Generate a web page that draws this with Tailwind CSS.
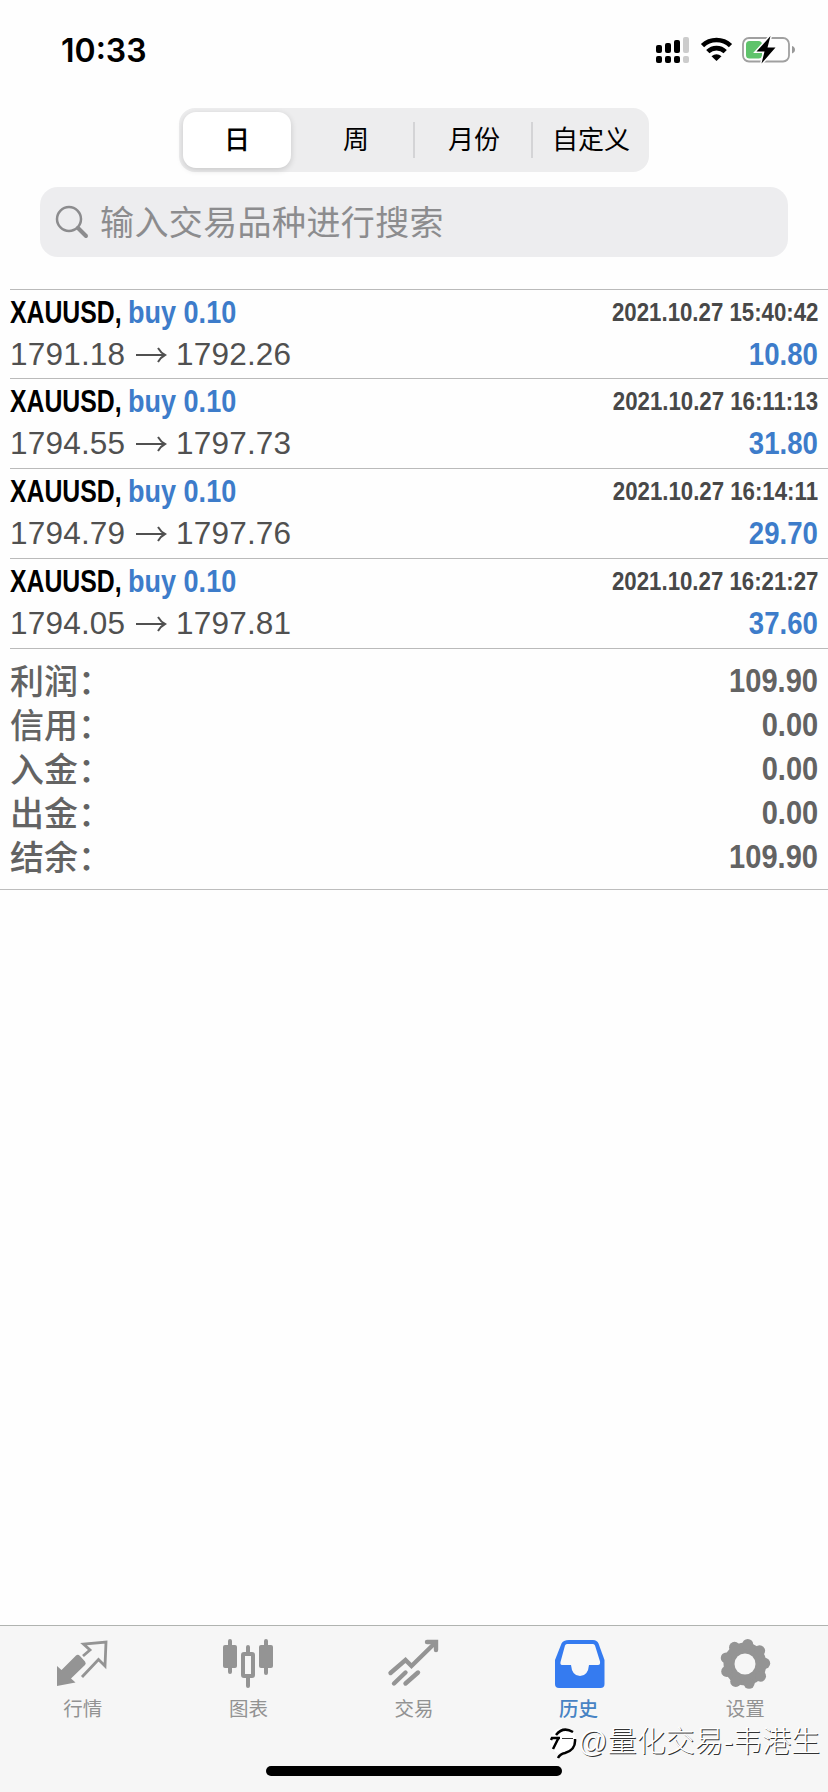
<!DOCTYPE html>
<html lang="zh-CN">
<head>
<meta charset="utf-8">
<title>历史</title>
<script src="https://cdn.jsdelivr.net/npm/@tailwindcss/browser@4"></script>
</head>
<body class="relative flex h-[1792px] w-[828px] flex-col overflow-hidden bg-[#fefefe] font-['Liberation_Sans','Noto_Sans_CJK_SC',sans-serif] text-black">

<header class="flex h-[108px] shrink-0 items-start justify-between pl-[61px] pr-[32px]">
  <div class="mt-[31px] h-10 font-['Inter',sans-serif] text-[32px] leading-10 font-semibold">10:33</div>
  <svg class="mt-[34px]" width="141" height="32" viewBox="654 34 141 32">
    <g fill="#000"><rect x="655" y="45" width="6" height="8" rx="2"/><rect x="664" y="43" width="6" height="10" rx="2"/><rect x="673" y="40" width="6" height="13" rx="2"/><rect x="655" y="56" width="6" height="7" rx="2"/><rect x="664" y="56" width="6" height="7" rx="2"/><rect x="673" y="56" width="6" height="7" rx="2"/></g>
    <g fill="#ccc"><rect x="682" y="37" width="6" height="16" rx="2"/><rect x="682" y="56" width="6" height="7" rx="2"/></g>
    <g fill="none" stroke="#000" stroke-width="4.6"><path d="M701.5 45.7A20 20 0 0 1 729.5 45.7"/><path d="M706.8 51.7A12.3 12.3 0 0 1 724.2 51.7"/></g>
    <path d="M715.5 61L710.5 56.3Q715.5 52.3 720.5 56.3Z"/>
    <rect x="742" y="38" width="46" height="23.5" rx="6" fill="#fefefe" stroke="#a0a0a0" stroke-width="1.8"/>
    <rect x="745" y="41" width="16" height="17.5" rx="3.5" fill="#5fc36b"/>
    <path d="M791 46q3 1 3 3.7t-3 3.7Z" fill="#999"/>
    <path d="M769.5 36L755.5 51.5H763.5L760.5 63.5L774.5 47.5H766.5Z" fill="#000" stroke="#fefefe" stroke-width="3" paint-order="stroke"/>
  </svg>
</header>

<nav class="ml-[179px] flex h-16 w-[470px] shrink-0 items-center rounded-[16px] bg-[#ededee] text-[26px]">
  <div class="ml-1 flex h-14 w-[108px] items-center justify-center rounded-[13px] bg-white font-medium shadow-[0_2px_6px_rgba(0,0,0,0.16)]"><span>日</span></div>
  <div class="flex h-9 w-[124px] items-center justify-center border-r-2 border-[#d4d4d6]"><span class="ml-2">周</span></div>
  <div class="flex h-9 w-[118px] items-center justify-center border-r-2 border-[#d4d4d6]"><span class="ml-0.5">月份</span></div>
  <div class="flex flex-1 items-center justify-center"><span>自定义</span></div>
</nav>

<div class="mt-[15px] ml-10 flex h-[70px] w-[748px] shrink-0 items-center rounded-[18px] bg-[#ededef] pl-[15px] text-[#8c8c8e]">
  <svg width="34" height="34" viewBox="0 0 34 34" fill="none" stroke="currentColor"><circle cx="14" cy="14" r="12" stroke-width="2.5"/><path d="M23 23L31 31" stroke-width="4" stroke-linecap="round"/></svg>
  <span class="mt-px ml-[11px] text-[34px] leading-none tracking-[0.4px]">输入交易品种进行搜索</span>
</div>

<main class="mt-[32px] flex flex-1 flex-col">
  <div id="trades" class="flex flex-col"></div>
  <section id="totals" class="ml-2.5 flex flex-col pt-[9px]"></section>
  <div class="mt-[11px] h-px w-full bg-[#bdbdbd]"></div>
</main>

<template id="trade">
  <article class="ml-2.5 flex h-[90px] flex-col border-t border-[#bababa] first:h-[89px]">
    <div class="flex h-[45px] items-center justify-between pr-2.5 pb-0.5 text-[32px] leading-none font-bold whitespace-nowrap">
      <div class="flex"><span class="w-[118px]"><span class="inline-block origin-left scale-x-[0.775]">XAUUSD,</span></span><span class="inline-block origin-left scale-x-[0.845] text-[#3d7cca]">buy 0.10</span></div>
      <span data-f="time" class="origin-right scale-x-[0.855] text-[26px] text-[#484848]"></span>
    </div>
    <div class="flex h-[39px] items-center justify-between pr-2.5 text-[31.5px] leading-none text-[#505050]">
      <div class="flex items-center"><span data-f="from" class="w-[125px] tracking-[0.2px]"></span><svg width="32" height="20" viewBox="0 0 32 20" fill="none" stroke="currentColor" stroke-width="2"><path d="M1 10H30M23 3Q26 8 30 10Q26 12 23 17"/></svg><span data-f="to" class="ml-[9px] tracking-[0.2px]"></span></div>
      <span data-f="profit" class="mt-px origin-right scale-x-[0.875] font-bold text-[#3d7cca]"></span>
    </div>
  </article>
</template>
<template id="total">
  <div class="flex h-11 items-center justify-between pr-2.5 text-[#636363]">
    <span data-f="label" class="font-['Noto_Sans_CJK_SC',sans-serif] text-[34px] leading-none font-medium"></span>
    <span data-f="value" class="origin-right scale-x-[0.88] text-[33px] leading-none font-bold"></span>
  </div>
</template>

<footer class="flex h-[167px] shrink-0 border-t border-[#b0b3b0] bg-[#f6f6f6] pt-2.5 text-[19.5px] text-[#929292]">
  <div class="flex flex-1 flex-col items-center">
    <svg class="-ml-0.5" width="54" height="58" viewBox="55 1636 54 58" fill="#949494"><path d="M57 1666L61.500 1670L76 1655.500Q78 1654 80 1656L85 1661.500Q86.500 1663.500 85 1665L71 1678.500L75.500 1682.500L57 1686Z"/><path d="M83 1656L90 1650L83.500 1644L106 1642L105 1666L98.500 1659.500L82 1677" fill="none" stroke="#949494" stroke-width="2.800"/></svg>
    <span class="mt-px leading-7">行情</span>
  </div>
  <div class="flex flex-1 flex-col items-center">
    <svg width="54" height="58" viewBox="221 1636 54 58" fill="#949494"><rect x="223" y="1645" width="14" height="23" rx="2"/><rect x="259" y="1645" width="14" height="23" rx="2"/><path d="M230 1641V1672M266 1641V1673M248 1647V1653M248 1677V1686" stroke="#949494" stroke-width="4" stroke-linecap="round"/><rect x="243" y="1654" width="10" height="22" rx="1" fill="#f6f6f6" stroke="#949494" stroke-width="4"/></svg>
    <span class="mt-px leading-7">图表</span>
  </div>
  <div class="flex flex-1 flex-col items-center">
    <svg width="54" height="58" viewBox="387 1636 54 58" fill="none" stroke="#949494" stroke-width="4.4" stroke-linecap="round"><path d="M390.500 1673L405.500 1660L411.500 1666L435 1643"/><path d="M394 1683.500L405.500 1672.500M405.500 1683.500L418 1672.500"/><path d="M427 1642H436V1650"/><path d="M428 1641H437V1650Z" fill="#949494" stroke="none"/></svg>
    <span class="mt-px leading-7">交易</span>
  </div>
  <div class="flex flex-1 flex-col items-center text-[#4783c4]">
    <svg width="54" height="58" viewBox="551 1636 54 58"><path d="M567 1640H591Q595 1640 596.500 1643.500L602.500 1660V1684Q602.500 1688 598.500 1688H557Q553 1688 553 1684V1660L559.500 1643.500Q561 1640 567 1640Z" fill="#357bf0"/><path d="M565 1644H591Q592.500 1644 593 1645.500L598 1661.500Q598.500 1665 596 1665H587Q586 1676 578 1676Q570 1676 569 1665H560Q558 1665 558.500 1662L563 1645.500Q563.500 1644 565 1644Z" fill="#f8f8f8"/></svg>
    <span class="mt-px mr-0.5 leading-7 font-medium">历史</span>
  </div>
  <div class="flex flex-1 flex-col items-center">
    <svg width="54" height="58" viewBox="717 1636 54 58"><g fill="#949494"><circle cx="744" cy="1664" r="21.500"/><g id="teeth"></g></g><circle cx="744" cy="1664" r="10.500" fill="#f6f6f6"/></svg>
    <span class="mt-px leading-7">设置</span>
  </div>
</footer>

<div class="absolute top-[1766px] left-[266px] h-2.5 w-[296px] rounded-full bg-black"></div>
<div class="absolute top-[1724px] left-[549px] flex items-center whitespace-nowrap text-white">
  <svg width="28" height="36" viewBox="549 1726 28 36" fill="none"><circle cx="563" cy="1743" r="13" fill="#fff"/><path d="M551 1742L552 1740H560M553 1751L559 1739M556 1737Q563 1728 573 1734M575 1741Q576 1752 565 1755Q560 1756 558 1760" stroke="#000" stroke-width="2.500"/><path d="M562 1740.500H573" stroke="#333"/></svg>
  <span class="ml-[1px] text-[29px] leading-9 font-light [text-shadow:1px_1px_0_#333]">@量化交易-韦港生</span>
</div>

<script>
const fill = (id, target, data) => {
  const node = document.getElementById(id).content.cloneNode(true);
  for (const [key, value] of Object.entries(data)) node.querySelector(`[data-f="${key}"]`).textContent = value;
  document.getElementById(target).append(node);
};
[['15:40:42','1791.18','1792.26','10.80'],['16:11:13','1794.55','1797.73','31.80'],['16:14:11','1794.79','1797.76','29.70'],['16:21:27','1794.05','1797.81','37.60']]
  .forEach(([t, from, to, profit]) => fill('trade', 'trades', { time: '2021.10.27 ' + t, from, to, profit }));
document.getElementById('trades').insertAdjacentHTML('beforeend', '<div class="ml-2.5 h-px bg-[#bababa]"></div>');
[['利润','109.90'],['信用','0.00'],['入金','0.00'],['出金','0.00'],['结余','109.90']]
  .forEach(([label, value]) => fill('total', 'totals', { label: label + '\uff1a', value }));
const teeth = document.getElementById('teeth');
for (let i = 0; i < 9; i++) {
  const c = document.createElementNS('http://www.w3.org/2000/svg', 'circle');
  const a = (i * 40 - 82) * Math.PI / 180;
  c.setAttribute('cx', 744 + 19.7 * Math.cos(a)); c.setAttribute('cy', 1664 + 19.7 * Math.sin(a)); c.setAttribute('r', 5.5);
  teeth.append(c);
}
</script>
</body>
</html>
